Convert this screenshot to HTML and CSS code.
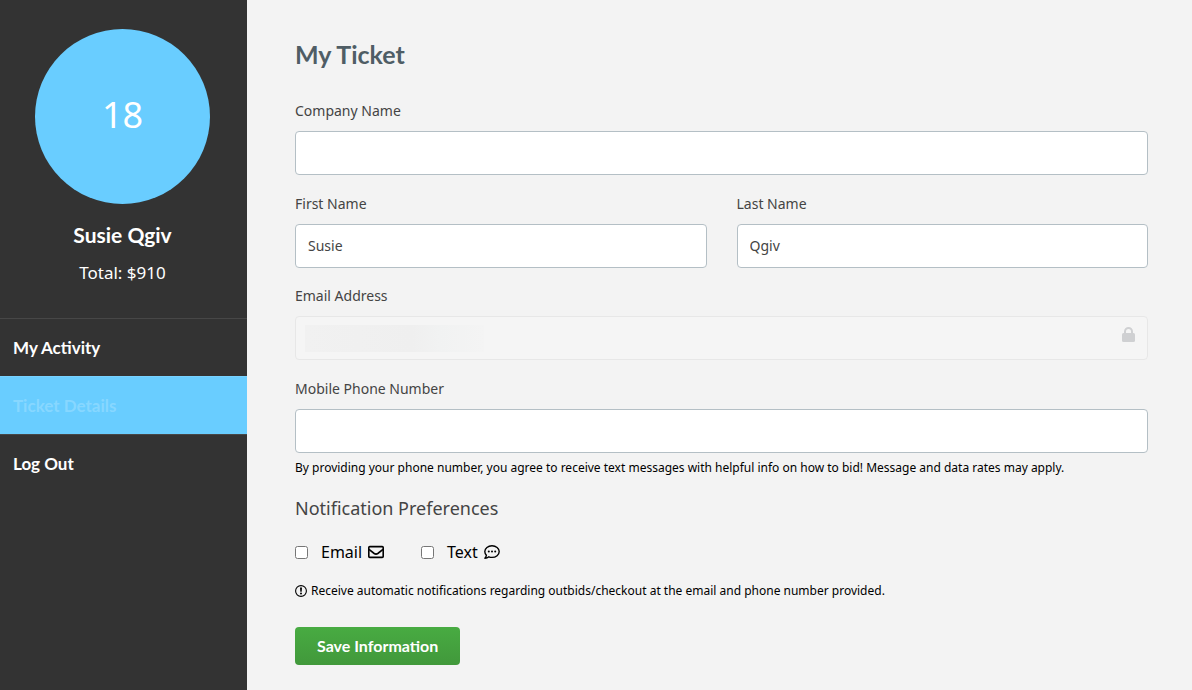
FILE: index.html
```html
<!DOCTYPE html>
<html lang="en">
  <head>
    <meta charset="UTF-8" />
    <meta name="viewport" content="width=device-width, initial-scale=1.0" />
    <title>My Ticket</title>
    <link rel="stylesheet" href="styles.css">
  </head>
  <body>
    <aside class="sidebar">
      <div class="profile">
        <div class="bidder-number">18</div>
        <h2 class="profile-name">Susie Qgiv</h2>
        <p class="profile-total">Total: $910</p>
      </div>
      <nav class="menu">
        <a href="#activity">My Activity</a>
        <a href="#ticket" class="active" aria-current="page">Ticket Details</a>
        <a href="#logout">Log Out</a>
      </nav>
    </aside>

    <main class="content">
      <h1>My Ticket</h1>
      <form>
        <div class="field">
          <label for="company">Company Name</label>
          <input type="text" id="company" />
        </div>
        <div class="row">
          <div class="field">
            <label for="firstName">First Name</label>
            <input type="text" id="firstName" value="Susie" />
          </div>
          <div class="field">
            <label for="lastName">Last Name</label>
            <input type="text" id="lastName" value="Qgiv" />
          </div>
        </div>
        <div class="field locked">
          <label for="email">Email Address</label>
          <input type="email" id="email" disabled />
          <span class="redacted"></span>
          <svg class="lock" viewBox="0 0 13 15" aria-hidden="true">
            <path d="M3 7V4.5a3.5 3.5 0 0 1 7 0V7" fill="none" stroke="currentColor" stroke-width="2" />
            <rect x="0" y="6" width="13" height="9" rx="1.5" fill="currentColor" />
          </svg>
        </div>
        <div class="field">
          <label for="phone">Mobile Phone Number</label>
          <input type="tel" id="phone" />
          <p class="help">By providing your phone number, you agree to receive text messages with helpful info on how to bid! Message and data rates may apply.</p>
        </div>

        <h3>Notification Preferences</h3>
        <div class="options">
          <label class="option">
            <input type="checkbox" />
            <span>Email</span>
            <svg viewBox="0 0 16 14" width="16" height="14" aria-hidden="true">
              <g fill="none" stroke="currentColor" stroke-width="1.6" stroke-linejoin="round">
                <rect x="0.8" y="1.6" width="14.4" height="10.8" rx="1" />
                <path d="M1 4.4l5.2 4.1q1.8 1.3 3.6 0L15 4.4" />
              </g>
            </svg>
          </label>
          <label class="option">
            <input type="checkbox" />
            <span>Text</span>
            <svg viewBox="0 0 16 14" width="16" height="14" aria-hidden="true">
              <path d="M8 .8c4 0 7.2 2.6 7.2 5.8S12 12.4 8 12.4c-1.1 0-2.2-.2-3.1-.6-1 .8-2.4 1.4-4 1.4.8-.9 1.4-2 1.5-3C1.4 9.2.8 8 .8 6.6.8 3.4 4 .8 8 .8z" fill="none" stroke="currentColor" stroke-width="1.4" stroke-linejoin="round" />
              <g fill="currentColor">
                <circle cx="4.8" cy="6.6" r="1" />
                <circle cx="8" cy="6.6" r="1" />
                <circle cx="11.2" cy="6.6" r="1" />
              </g>
            </svg>
          </label>
        </div>
        <p class="note">
          <svg viewBox="0 0 12 12" width="12" height="12" aria-hidden="true">
            <circle cx="6" cy="6" r="5.4" fill="none" stroke="currentColor" stroke-width="1.1" />
            <path d="M5 2.6h2l-.3 4.2H5.3z" fill="currentColor" />
            <circle cx="6" cy="8.5" r="1" fill="currentColor" />
          </svg>
          Receive automatic notifications regarding outbids/checkout at the email and phone number provided.
        </p>
        <button type="submit" class="save">Save Information</button>
      </form>
    </main>
  </body>
</html>
```
FILE: styles.css
```css
* {
  box-sizing: border-box;
}

body {
  margin: 0;
  min-height: 100vh;
  display: flex;
  background: #f3f3f3;
  color: #000;
  font-family: "Noto Sans", "Open Sans", sans-serif;
  font-size: 14px;
  line-height: 20px;
}

h1, h2, h3, p {
  margin: 0;
}

h1, h2, .menu a, .save {
  font-family: Lato, "Open Sans", sans-serif;
  font-weight: bold;
}

.sidebar {
  flex: 0 0 247px;
  background: #333;
  color: #fff;
}

.profile {
  display: flex;
  flex-direction: column;
  align-items: center;
  padding: 29px 2px 34px 0;
}

.bidder-number {
  display: flex;
  align-items: center;
  justify-content: center;
  width: 175px;
  height: 175px;
  padding-bottom: 4px;
  border-radius: 50%;
  background: #69cdff;
  font-size: 36px;
}

.profile-name {
  margin: 16px 0 12px;
  font-size: 21px;
  line-height: 30px;
}

.profile-total {
  font-size: 17px;
  line-height: 22px;
}

.menu a {
  display: block;
  height: 58px;
  padding: 0 13px;
  border-top: 1px solid #474747;
  color: #fff;
  font-size: 17px;
  line-height: 57px;
  text-decoration: none;
}

.menu a.active {
  border-top-color: #78d2ff;
  background: #69cdff;
  color: #87d7ff;
}

.content {
  flex: 1;
  padding: 36px 44px 24px 48px;
}

h1 {
  margin-bottom: 29px;
  color: #4f5d65;
  font-size: 25px;
  line-height: 36px;
}

.row {
  display: flex;
  gap: 30px;
}

.row .field {
  flex: 1;
  margin-bottom: 18px;
}

.field {
  margin-bottom: 19px;
  color: #444;
}

.field label {
  display: block;
  margin-bottom: 10px;
}

.field input {
  display: block;
  width: 100%;
  height: 44px;
  padding: 0 12px 2px;
  border: 1px solid #b4bfc5;
  border-radius: 4px;
  background: #fff;
  color: #444;
  font: inherit;
}

.locked {
  position: relative;
}

.field input:disabled {
  border-color: #e7e7e7;
  background: #f5f5f5;
}

/* blurred out address */
.redacted {
  position: absolute;
  left: 10px;
  bottom: 8px;
  width: 179px;
  height: 27px;
  background: linear-gradient(to right, #f1f1f1, #efefef 60%, #f1f2f2 75%, #f4f4f4);
}

.lock {
  position: absolute;
  right: 13px;
  bottom: 18px;
  width: 13px;
  height: 15px;
  color: #cfd0d2;
}

.help {
  margin-top: 5px;
  color: #000;
  font-size: 12px;
}

h3 {
  margin-bottom: 21px;
  color: #444;
  font-size: 18px;
  font-weight: normal;
  line-height: 22px;
}

.options {
  display: flex;
  gap: 37px;
  margin-bottom: 17px;
}

.option {
  display: flex;
  align-items: center;
  gap: 6px;
  font-size: 16px;
  line-height: 24px;
}

.option input {
  width: 13px;
  height: 13px;
  margin: 0 7px 0 0;
}

.note {
  display: flex;
  align-items: center;
  gap: 4px;
  margin-bottom: 26px;
  font-size: 12px;
}

.save {
  height: 38px;
  padding: 0 22px 2px;
  border: 0;
  border-radius: 4px;
  background: linear-gradient(#48ab42, #41983b);
  color: #fff;
  font-size: 16px;
}
```
